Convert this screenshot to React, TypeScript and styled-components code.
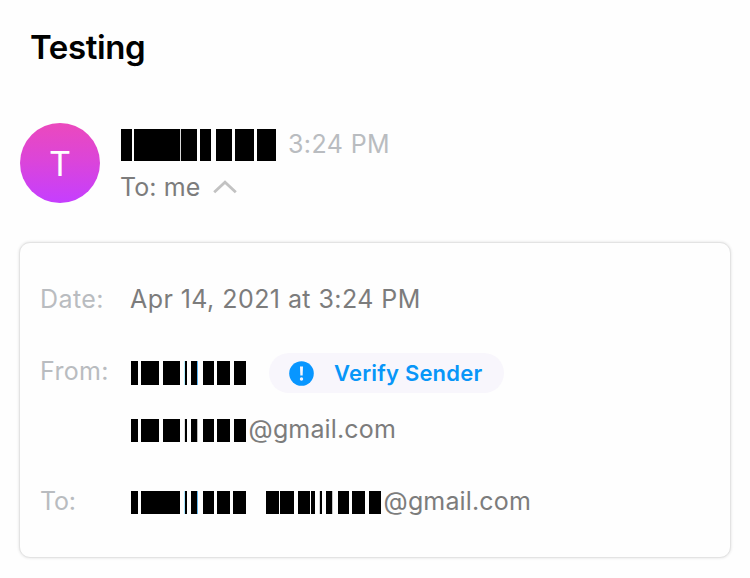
import React from "react";
import styled, { createGlobalStyle, css } from "styled-components";

const GlobalStyle = createGlobalStyle`
  * { box-sizing: border-box; }
  html, body { margin: 0; background: #fefefe; }
  body {
    font-family: Inter, "Liberation Sans", sans-serif;
    overflow: hidden;
  }
`;

const Page = styled.main`
  display: flex;
  flex-direction: column;
  width: 750px;
  height: 578px;
  padding: 27px 19px 0;
  background: #fefefe;
`;

const Subject = styled.h1`
  margin: 0 0 56px 11px;
  height: 40px;
  font-size: 33px;
  line-height: 40px;
  font-weight: 600;
  letter-spacing: -0.4px;
  color: #000;
`;

const Header = styled.header`
  display: flex;
  gap: 21px;
  height: 80px;
  margin: 0 0 39px 1px;
`;

const Avatar = styled.div`
  display: flex;
  align-items: center;
  justify-content: center;
  width: 80px;
  height: 80px;
  border-radius: 50%;
  background: linear-gradient(180deg, #eb49bd 0%, #dc45d8 45%, #c53eff 100%);
  color: #fff;
  font-size: 34px;
  font-weight: 400;
`;

const Meta = styled.div`
  display: flex;
  flex-direction: column;
  padding-top: 5px;
`;

const MetaLine = styled.div<{ $height: number; $gap: number }>`
  display: flex;
  height: ${(p) => p.$height}px;
  gap: ${(p) => p.$gap}px;
`;

const Text = styled.span<{ $tone?: "muted" | "body"; $spacing?: number; $shift?: number }>`
  margin-left: ${(p) => p.$shift ?? 0}px;
  font-size: 25px;
  line-height: 32px;
  font-weight: 400;
  white-space: nowrap;
  letter-spacing: ${(p) => p.$spacing ?? 0}px;
  color: ${(p) => (p.$tone === "muted" ? "#b9bcc0" : "#7c7c7c")};
`;

const Chevron = styled.svg`
  display: block;
  width: 24px;
  height: 14px;
  margin-top: 9px;
`;

const Card = styled.section`
  display: grid;
  grid-template-columns: 90px 1fr;
  grid-template-rows: 72px 58px 72px 32px;
  width: 712px;
  height: 316px;
  padding: 40px 20px 0 21px;
  border: 1px solid #e3e3e3;
  border-radius: 11px;
  background: #fefefe;
  box-shadow: 0 0 3px rgba(0, 0, 0, 0.12);
`;

const Value = styled.div<{ $column?: number }>`
  display: flex;
  height: 32px;
  ${(p) => p.$column && css`grid-column: ${p.$column};`}
`;

const Strip = styled.span<{ $height: number; $top: number; $left?: number }>`
  display: flex;
  flex: none;
  height: ${(p) => p.$height}px;
  margin: ${(p) => p.$top}px 0 0 ${(p) => p.$left ?? 0}px;
`;

const Bar = styled.i<{ $before: number; $width: number; $color: string }>`
  flex: none;
  width: ${(p) => p.$width}px;
  margin-left: ${(p) => p.$before}px;
  background: ${(p) => p.$color};
`;

const VerifyButton = styled.button`
  display: flex;
  align-items: center;
  gap: 20px;
  width: 235px;
  height: 40px;
  margin: -2px 0 0 23px;
  padding: 0 0 0 20px;
  border: 0;
  border-radius: 20px;
  background: #f8f6fc;
  color: #0896f8;
  font-family: inherit;
  font-size: 22px;
  line-height: 40px;
  font-weight: 600;
  letter-spacing: 0.2px;
  white-space: nowrap;
`;

const AlertIcon = styled.svg`
  flex: none;
  width: 25px;
  height: 25px;
`;

/* Each entry is [space before, width, optional colour]. */
type BarSpec = [number, number, string?];

const NAME: BarSpec[] = [[0, 11], [2, 46], [0, 1, "#d9d9d9"], [0, 16], [3, 11], [5, 16], [3, 19], [3, 19]];
const tinted = (light: string, dark: string): BarSpec[] => [
  [0, 7], [3, 18], [4, 17], [4, 1, light], [0, 2], [4, 6], [0, 1, dark], [5, 11], [3, 13], [4, 12],
];
const SENDER = tinted("#b5f1ff", "#5ab5f5");
const ADDRESS = tinted("#e0e0e0", "#b9b9b9");
const RECIPIENT: BarSpec[] = [
  [0, 7], [3, 39], [4, 1, "#a9e7ff"], [0, 2], [4, 6], [0, 1, "#62b7ee"], [5, 11], [3, 13], [3, 13],
];
const RECIPIENT_ADDRESS: BarSpec[] = [
  [0, 13], [1, 14], [4, 12], [1, 4], [4, 1, "#d5d5d5"], [0, 2], [4, 6], [0, 1, "#c4c4c4"], [5, 11], [3, 13], [4, 12],
];

function Redacted({ bars, height, top, left }: { bars: BarSpec[]; height: number; top: number; left?: number }) {
  return (
    <Strip $height={height} $top={top} $left={left} aria-hidden>
      {bars.map(([before, width, color], i) => (
        <Bar key={i} $before={before} $width={width} $color={color ?? "#000"} />
      ))}
    </Strip>
  );
}

export default function App() {
  return (
    <>
      <GlobalStyle />
      <Page>
        <Subject>Testing</Subject>
        <Header>
          <Avatar>T</Avatar>
          <Meta>
            <MetaLine $height={43} $gap={12}>
              <Redacted bars={NAME} height={32} top={1} />
              <Text $tone="muted" $spacing={0.4}>3:24 PM</Text>
            </MetaLine>
            <MetaLine $height={32} $gap={13}>
              <Text $shift={-1} $spacing={0.1}>To: me</Text>
              <Chevron viewBox="0 0 24 14" fill="none" stroke="#c2c2c2" strokeWidth="2.8">
                <path d="M1.2 12.2 12 2.2l10.8 10" />
              </Chevron>
            </MetaLine>
          </Meta>
        </Header>
        <Card>
          <Text $tone="muted" $shift={-1} $spacing={0.4}>Date:</Text>
          <Value>
            <Text $shift={-1} $spacing={0.44}>Apr 14, 2021 at 3:24 PM</Text>
          </Value>

          <Text $tone="muted" $shift={-1} $spacing={0.35}>From:</Text>
          <Value>
            <Redacted bars={SENDER} height={24} top={6} />
            <VerifyButton>
              <AlertIcon viewBox="0 0 25 25">
                <circle cx="12.5" cy="12.5" r="12.3" fill="#0896ff" />
                <path d="M11 5.5h3l-.35 9h-2.3z" fill="#f8f6fc" />
                <circle cx="12.5" cy="18" r="1.7" fill="#f8f6fc" />
              </AlertIcon>
              Verify Sender
            </VerifyButton>
          </Value>

          <Value $column={2}>
            <Redacted bars={ADDRESS} height={23} top={6} />
            <Text $shift={2.6} $spacing={0.15}>@gmail.com</Text>
          </Value>

          <Text $tone="muted" $shift={-1} $spacing={-0.2}>To:</Text>
          <Value>
            <Redacted bars={RECIPIENT} height={23} top={6} />
            <Redacted bars={RECIPIENT_ADDRESS} height={23} top={6} left={20} />
            <Text $shift={2.6} $spacing={0.15}>@gmail.com</Text>
          </Value>
        </Card>
      </Page>
    </>
  );
}
